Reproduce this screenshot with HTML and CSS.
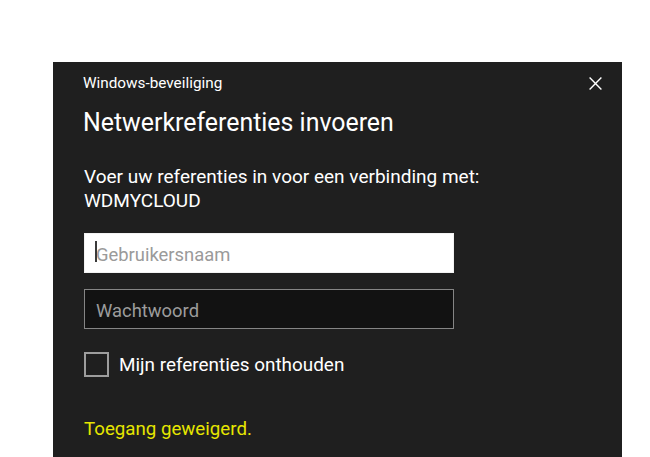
FILE: index.html
```html
<!DOCTYPE html>
<html lang="nl">
<head>
    <meta charset="UTF-8">
    <meta name="viewport" content="width=device-width, initial-scale=1.0">
    <title>Windows-beveiliging</title>
    <link rel="stylesheet" href="styles.css">
</head>
<body>
    <div class="dialog">
        <div class="dialog-header">
            <span class="app-name">Windows-beveiliging</span>
            <button class="close-btn" aria-label="Sluiten">
                <svg width="13" height="13" viewBox="0 0 13 13">
                    <path d="M0.6 0.6 L12.4 12.4 M12.4 0.6 L0.6 12.4" stroke="#ffffff" stroke-width="1.4" fill="none"/>
                </svg>
            </button>
        </div>
        <h1 class="title">Netwerkreferenties invoeren</h1>
        <p class="prompt">Voer uw referenties in voor een verbinding met:<br>WDMYCLOUD</p>

        <div class="field">
            <input type="text" class="text-input light" id="username" placeholder="Gebruikersnaam">
            <span class="caret"></span>
        </div>
        <div class="field">
            <input type="password" class="text-input dark" id="password" placeholder="Wachtwoord">
        </div>

        <label class="remember">
            <span class="checkbox"></span>
            <span>Mijn referenties onthouden</span>
        </label>

        <p class="error">Toegang geweigerd.</p>
    </div>
</body>
</html>
```
FILE: styles.css
```css
body {
    margin: 0;
    background: #ffffff;
    font-family: Roboto, "Noto Sans", sans-serif;
}
.dialog {
    margin: 62px 0 0 53px;
    width: 569px;
    height: 395px;
    box-sizing: border-box;
    padding: 11px 20px 0 30px;
    background: #1f1f1f;
    color: #ffffff;
    overflow: hidden;
}
.dialog-header {
    display: flex;
    justify-content: space-between;
    align-items: center;
    height: 20px;
}
.app-name {
    font-size: 15.3px;
    line-height: 20px;
}
.close-btn {
    display: flex;
    padding: 0;
    border: none;
    background: none;
    cursor: pointer;
}
.title {
    margin: 14px 0 0;
    font-size: 24.9px;
    font-weight: normal;
    line-height: 32px;
}
.prompt {
    margin: 26px 0 0 1px;
    font-size: 19px;
    line-height: 24.4px;
}
.field {
    position: relative;
    width: 370px;
    margin: 19px 0 0 1px;
}
.field + .field {
    margin-top: 16px;
}
.text-input {
    display: block;
    width: 100%;
    height: 40px;
    box-sizing: border-box;
    padding: 4px 11px 0;
    font-family: Roboto, "Noto Sans", sans-serif;
    font-size: 18.4px;
    outline: none;
}
.text-input.light {
    background: #ffffff;
    border: 1px solid #f2f2f2;
}
.text-input.light::placeholder {
    color: #9a9a9a;
}
.text-input.dark {
    background: #121212;
    border: 1px solid #858585;
    color: #ffffff;
}
.text-input.dark::placeholder {
    color: #9c9c9c;
}
.caret {
    position: absolute;
    left: 11px;
    top: 8px;
    width: 2px;
    height: 21px;
    background: #3a3a3a;
}
.remember {
    display: flex;
    align-items: center;
    gap: 10px;
    margin: 23px 0 0 1px;
    font-size: 18.9px;
    line-height: 24px;
}
.remember span:last-child {
    padding-top: 1px;
}
.checkbox {
    width: 25px;
    height: 25px;
    box-sizing: border-box;
    border: 2px solid #9d9d9d;
}
.error {
    margin: 40px 0 0 1px;
    font-size: 18.7px;
    line-height: 24px;
    color: #e6e600;
}
```
